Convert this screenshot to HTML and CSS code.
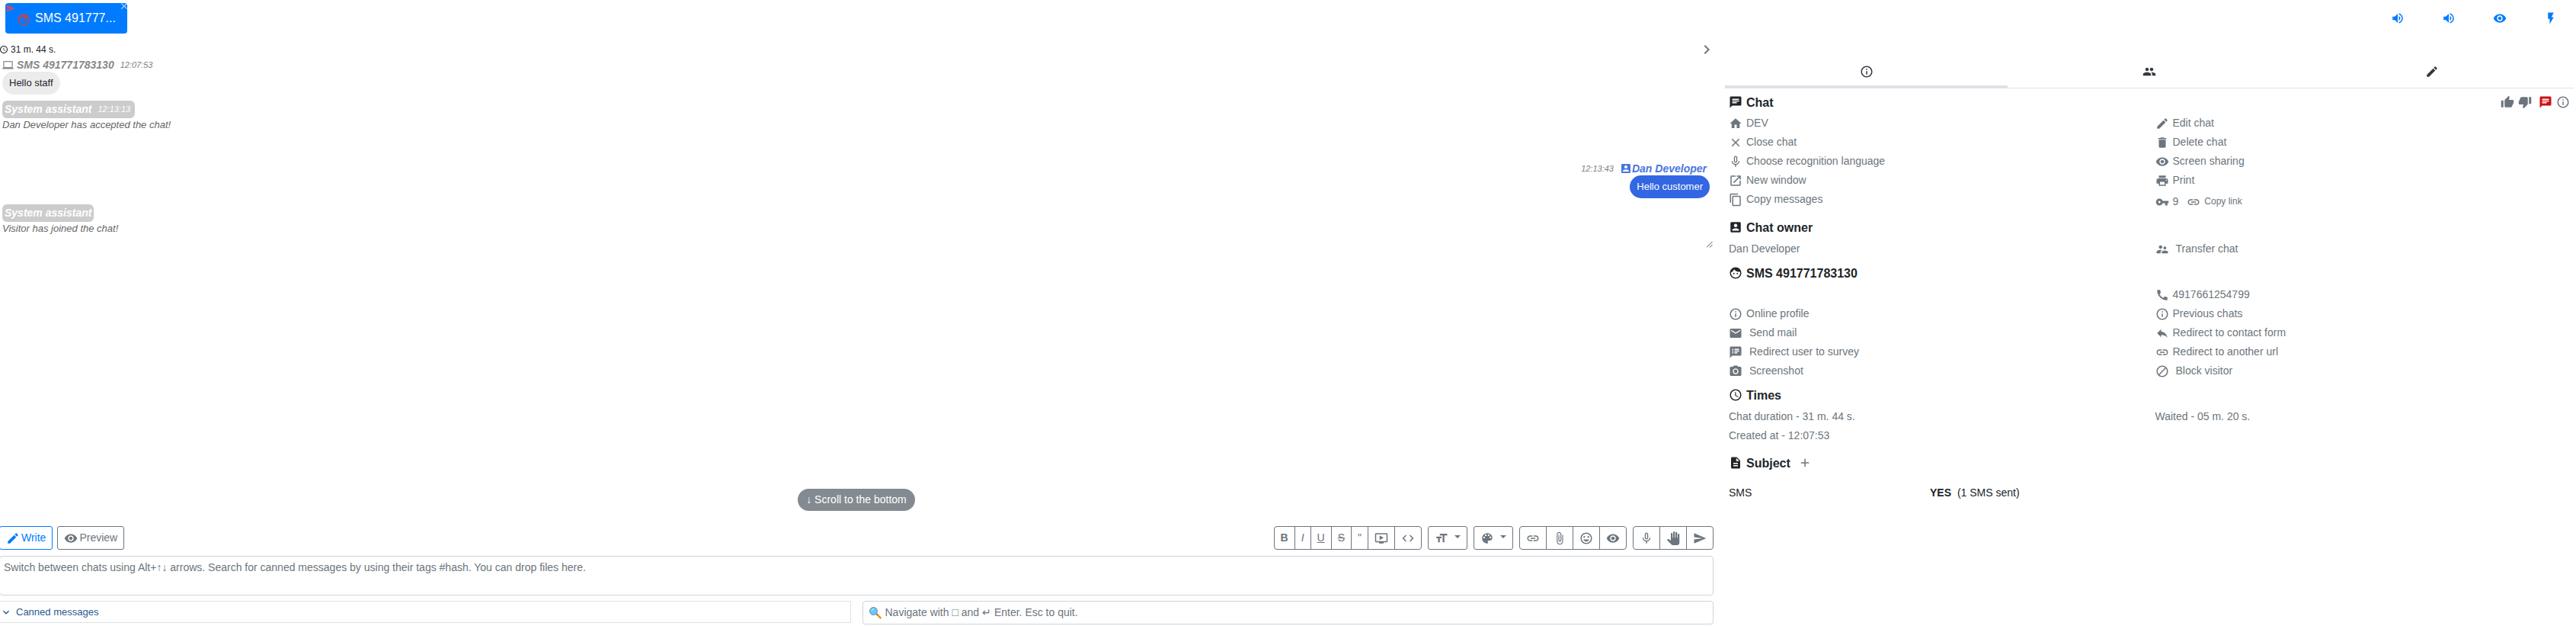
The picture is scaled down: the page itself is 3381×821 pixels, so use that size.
FILE: index.html
```
<!DOCTYPE html>
<html lang="en">
<head>
<meta charset="utf-8">
<title>Chat</title>
<link rel="stylesheet" href="styles.css">
</head>
<body>
<svg class="sprite" aria-hidden="true">
  <symbol id="send" viewBox="0 0 24 24"><path d="M2 21l21-9L2 3v7l15 2-15 2z"/></symbol>
  <symbol id="face" viewBox="0 0 24 24"><path d="M9 11.75A1.25 1.25 0 1 0 9 14.25 1.25 1.25 0 1 0 9 11.75zM15 11.75A1.25 1.25 0 1 0 15 14.25 1.25 1.25 0 1 0 15 11.75zM12 2C6.48 2 2 6.48 2 12s4.48 10 10 10 10-4.48 10-10S17.52 2 12 2zm0 18c-4.41 0-8-3.59-8-8 0-.29.02-.58.05-.86 2.36-1.05 4.23-2.98 5.21-5.37C11.07 8.33 14.05 10 17.42 10c.78 0 1.53-.09 2.25-.26.21.71.33 1.47.33 2.26 0 4.41-3.59 8-8 8z"/></symbol>
  <symbol id="close" viewBox="0 0 24 24"><path d="M19 6.41L17.59 5 12 10.59 6.41 5 5 6.41 10.59 12 5 17.59 6.41 19 12 13.41 17.59 19 19 17.59 13.41 12z"/></symbol>
  <symbol id="volume" viewBox="0 0 24 24"><path d="M3 9v6h4l5 5V4L7 9H3zm13.5 3c0-1.77-1.02-3.29-2.5-4.03v8.05c1.48-.73 2.5-2.25 2.5-4.02zM14 3.23v2.06c2.89.86 5 3.54 5 6.71s-2.11 5.85-5 6.71v2.06c4.01-.91 7-4.49 7-8.77s-2.99-7.86-7-8.77z"/></symbol>
  <symbol id="eye" viewBox="0 0 24 24"><path d="M12 4.5C7 4.5 2.73 7.61 1 12c1.73 4.39 6 7.5 11 7.5s9.27-3.11 11-7.5c-1.73-4.39-6-7.5-11-7.5zM12 17c-2.76 0-5-2.24-5-5s2.24-5 5-5 5 2.24 5 5-2.24 5-5 5zm0-8c-1.66 0-3 1.34-3 3s1.34 3 3 3 3-1.34 3-3-1.34-3-3-3z"/></symbol>
  <symbol id="flash" viewBox="0 0 24 24"><path d="M7 2v11h3v9l7-12h-4l4-8z"/></symbol>
  <symbol id="clock" viewBox="0 0 24 24"><path d="M11.99 2C6.47 2 2 6.48 2 12s4.47 10 9.99 10C17.52 22 22 17.52 22 12S17.52 2 11.99 2zM12 20c-4.42 0-8-3.58-8-8s3.58-8 8-8 8 3.58 8 8-3.58 8-8 8zm.5-13H11v6l5.25 3.15.75-1.23-4.5-2.67z"/></symbol>
  <symbol id="laptop" viewBox="0 0 24 24"><path d="M20 18c1.1 0 1.99-.9 1.99-2L22 5c0-1.1-.9-2-2-2H4c-1.1 0-2 .9-2 2v11c0 1.1.9 2 2 2H0v2h24v-2h-4zM4 5h16v11H4V5z"/></symbol>
  <symbol id="account" viewBox="0 0 24 24"><path d="M3 5v14c0 1.1.89 2 2 2h14c1.1 0 2-.9 2-2V5c0-1.1-.9-2-2-2H5c-1.11 0-2 .9-2 2zm12 4c0 1.66-1.34 3-3 3s-3-1.34-3-3 1.34-3 3-3 3 1.34 3 3zm-9 8c0-2 4-3.1 6-3.1s6 1.1 6 3.1v1H6v-1z"/></symbol>
  <symbol id="chevron-right" viewBox="0 0 24 24"><path d="M10 6L8.59 7.41 13.17 12l-4.58 4.59L10 18l6-6z"/></symbol>
  <symbol id="chevron-down" viewBox="0 0 24 24"><path d="M7.41 8.59L12 13.17l4.59-4.58L18 10l-6 6-6-6z"/></symbol>
  <symbol id="info" viewBox="0 0 24 24"><path d="M11 17h2v-6h-2v6zm1-15C6.48 2 2 6.48 2 12s4.48 10 10 10 10-4.48 10-10S17.52 2 12 2zm0 18c-4.41 0-8-3.59-8-8s3.59-8 8-8 8 3.59 8 8-3.59 8-8 8zM11 9h2V7h-2v2z"/></symbol>
  <symbol id="people" viewBox="0 0 24 24"><path d="M16 11c1.66 0 2.99-1.34 2.99-3S17.66 5 16 5s-3 1.34-3 3 1.34 3 3 3zm-8 0c1.66 0 2.99-1.34 2.99-3S9.66 5 8 5 5 6.34 5 8s1.34 3 3 3zm0 2c-2.33 0-7 1.17-7 3.5V19h14v-2.500c0-2.330-4.670-3.500-7-3.500zm8 0c-.29 0-.62.02-.97.05 1.160.84 1.970 1.970 1.970 3.450V19h6v-2.500c0-2.330-4.670-3.500-7-3.500z"/></symbol>
  <symbol id="supervisor" viewBox="0 0 24 24"><path d="M16.500 12c1.380 0 2.490-1.120 2.490-2.500S17.880 7 16.500 7 14 8.120 14 9.500s1.120 2.500 2.500 2.500zM9 11c1.660 0 2.990-1.340 2.990-3S10.660 5 9 5 6 6.340 6 8s1.340 3 3 3zm7.500 3c-1.830 0-5.500.920-5.500 2.750V19h11v-2.250c0-1.830-3.670-2.750-5.500-2.750zM9 13c-2.330 0-7 1.170-7 3.500V19h7v-2.250c0-.850.330-2.340 2.370-3.470C10.500 13.100 9.660 13 9 13z"/></symbol>
  <symbol id="pencil" viewBox="0 0 24 24"><path d="M3 17.25V21h3.75L17.81 9.940l-3.750-3.750L3 17.250zM20.710 7.040c.39-.39.39-1.020 0-1.410l-2.340-2.340c-.39-.39-1.020-.39-1.410 0l-1.830 1.830 3.750 3.750 1.830-1.830z"/></symbol>
  <symbol id="chat" viewBox="0 0 24 24"><path d="M20 2H4c-1.100 0-1.990.9-1.990 2L2 22l4-4h14c1.100 0 2-.9 2-2V4c0-1.100-.9-2-2-2zM6 9h12v2H6V9zm8 5H6v-2h8v2zm4-6H6V6h12v2z"/></symbol>
  <symbol id="home" viewBox="0 0 24 24"><path d="M10 20v-6h4v6h5v-8h3L12 3 2 12h3v8z"/></symbol>
  <symbol id="mic" viewBox="0 0 24 24"><path d="M12 14c1.660 0 2.990-1.340 2.990-3L15 5c0-1.660-1.340-3-3-3S9 3.340 9 5v6c0 1.660 1.340 3 3 3zm-1.200-9.100c0-.66.54-1.200 1.200-1.200s1.200.54 1.200 1.200l-.010 6.200c0 .66-.53 1.200-1.190 1.200s-1.200-.54-1.200-1.200V4.900zm6.500 6.100c0 3-2.540 5.100-5.300 5.100S6.700 14 6.700 11H5c0 3.410 2.720 6.230 6 6.720V21h2v-3.280c3.280-.48 6-3.300 6-6.720h-1.700z"/></symbol>
  <symbol id="open" viewBox="0 0 24 24"><path d="M19 19H5V5h7V3H5c-1.110 0-2 .9-2 2v14c0 1.100.89 2 2 2h14c1.100 0 2-.9 2-2v-7h-2v7zM14 3v2h3.590l-9.830 9.830 1.410 1.410L19 6.410V10h2V3h-7z"/></symbol>
  <symbol id="copy" viewBox="0 0 24 24"><path d="M16 1H4c-1.100 0-2 .9-2 2v14h2V3h12V1zm3 4H8c-1.100 0-2 .9-2 2v14c0 1.100.9 2 2 2h11c1.100 0 2-.9 2-2V7c0-1.100-.9-2-2-2zm0 16H8V7h11v14z"/></symbol>
  <symbol id="thumb-up" viewBox="0 0 24 24"><path d="M1 21h4V9H1v12zm22-11c0-1.100-.9-2-2-2h-6.310l.95-4.570.030-.32c0-.41-.17-.79-.44-1.060L14.170 1 7.590 7.590C7.220 7.950 7 8.450 7 9v10c0 1.100.9 2 2 2h9c.83 0 1.540-.5 1.840-1.220l3.020-7.050c.09-.23.14-.47.14-.73v-2z"/></symbol>
  <symbol id="thumb-down" viewBox="0 0 24 24"><path d="M15 3H6c-.83 0-1.540.5-1.840 1.220l-3.020 7.050c-.09.23-.14.47-.14.73v2c0 1.100.9 2 2 2h6.310l-.95 4.570-.03.32c0 .41.17.79.44 1.060L9.830 23l6.590-6.590c.36-.36.58-.86.58-1.410V5c0-1.100-.9-2-2-2zm4 0v12h4V3h-4z"/></symbol>
  <symbol id="trash" viewBox="0 0 24 24"><path d="M6 19c0 1.100.9 2 2 2h8c1.100 0 2-.9 2-2V7H6v12zM19 4h-3.500l-1-1h-5l-1 1H5v2h14V4z"/></symbol>
  <symbol id="print" viewBox="0 0 24 24"><path d="M19 8H5c-1.660 0-3 1.340-3 3v6h4v4h12v-4h4v-6c0-1.660-1.340-3-3-3zm-3 11H8v-5h8v5zm3-7c-.55 0-1-.45-1-1s.45-1 1-1 1 .45 1 1-.45 1-1 1zm-1-9H6v4h12V3z"/></symbol>
  <symbol id="key" viewBox="0 0 24 24"><path d="M12.650 10C11.830 7.670 9.610 6 7 6c-3.310 0-6 2.690-6 6s2.690 6 6 6c2.610 0 4.830-1.670 5.650-4H17v4h4v-4h2v-4H12.650zM7 14c-1.100 0-2-.9-2-2s.9-2 2-2 2 .9 2 2-.9 2-2 2z"/></symbol>
  <symbol id="link" viewBox="0 0 24 24"><path d="M3.900 12c0-1.710 1.390-3.100 3.100-3.100h4V7H7c-2.760 0-5 2.240-5 5s2.240 5 5 5h4v-1.900H7c-1.710 0-3.100-1.390-3.100-3.100zM8 13h8v-2H8v2zm9-6h-4v1.900h4c1.710 0 3.100 1.390 3.100 3.100s-1.390 3.100-3.100 3.100h-4V17h4c2.760 0 5-2.240 5-5s-2.240-5-5-5z"/></symbol>
  <symbol id="phone" viewBox="0 0 24 24"><path d="M20.010 15.380c-1.230 0-2.420-.2-3.530-.56-.35-.12-.74-.03-1.010.24l-1.570 1.970c-2.830-1.350-5.480-3.900-6.890-6.830l1.950-1.660c.27-.28.35-.67.24-1.020-.37-1.110-.56-2.300-.56-3.530 0-.54-.45-.99-.99-.99H4.190C3.650 3 3 3.240 3 3.990 3 13.280 10.730 21 20.010 21c.71 0 .99-.63.99-1.180v-3.450c0-.54-.45-.99-.99-.99z"/></symbol>
  <symbol id="mail" viewBox="0 0 24 24"><path d="M20 4H4c-1.100 0-1.990.9-1.990 2L2 18c0 1.100.9 2 2 2h16c1.100 0 2-.9 2-2V6c0-1.100-.9-2-2-2zm0 4l-8 5-8-5V6l8 5 8-5v2z"/></symbol>
  <symbol id="survey" viewBox="0 0 24 24"><path d="M20 2H4c-1.100 0-1.990.9-1.990 2L2 22l4-4h14c1.100 0 2-.9 2-2V4c0-1.100-.9-2-2-2zM8 14H6v-2h2v2zm0-3H6V9h2v2zm0-3H6V6h2v2zm7 6h-5v-2h5v2zm3-3h-8V9h8v2zm0-3h-8V6h8v2z"/></symbol>
  <symbol id="camera" viewBox="0 0 24 24"><path d="M12 8.800a3.200 3.200 0 1 0 0 6.400 3.200 3.200 0 1 0 0-6.400zM9 2L7.170 4H4c-1.100 0-2 .9-2 2v12c0 1.100.9 2 2 2h16c1.100 0 2-.9 2-2V6c0-1.100-.9-2-2-2h-3.170L15 2H9zm3 15c-2.760 0-5-2.240-5-5s2.240-5 5-5 5 2.240 5 5-2.240 5-5 5z"/></symbol>
  <symbol id="reply" viewBox="0 0 24 24"><path d="M10 9V5l-7 7 7 7v-4.100c5 0 8.500 1.600 11 5.100-1-5-4-10-11-11z"/></symbol>
  <symbol id="block" viewBox="0 0 24 24"><path d="M12 2C6.480 2 2 6.480 2 12s4.480 10 10 10 10-4.480 10-10S17.520 2 12 2zM4 12c0-4.420 3.580-8 8-8 1.850 0 3.550.63 4.900 1.690L5.690 16.900C4.630 15.550 4 13.850 4 12zm8 8c-1.850 0-3.550-.63-4.900-1.690L18.310 7.100C19.370 8.450 20 10.150 20 12c0 4.420-3.580 8-8 8z"/></symbol>
  <symbol id="file" viewBox="0 0 24 24"><path d="M14 2H6c-1.100 0-1.990.9-1.990 2L4 20c0 1.100.89 2 1.990 2H18c1.100 0 2-.9 2-2V8l-6-6zm2 16H8v-2h8v2zm0-4H8v-2h8v2zm-3-5V3.500L18.500 9H13z"/></symbol>
  <symbol id="plus" viewBox="0 0 24 24"><path d="M19 13h-6v6h-2v-6H5v-2h6V5h2v6h6v2z"/></symbol>
  <symbol id="video" viewBox="0 0 24 24"><path d="M21 3H3c-1.110 0-2 .89-2 2v12c0 1.100.89 2 2 2h5v2h8v-2h5c1.100 0 1.990-.9 1.990-2L23 5c0-1.110-.9-2-2-2zm0 14H3V5h18v12zm-5-6l-7 4V7z"/></symbol>
  <symbol id="code" viewBox="0 0 24 24"><path d="M9.400 16.600L4.800 12l4.600-4.600L8 6l-6 6 6 6 1.400-1.400zm5.200 0l4.600-4.600-4.600-4.600L16 6l6 6-6 6-1.400-1.400z"/></symbol>
  <symbol id="size" viewBox="0 0 24 24"><path d="M9 4v3h5v12h3V7h5V4H9zm-6 8h3v7h3v-7h3V9H3v3z"/></symbol>
  <symbol id="palette" viewBox="0 0 24 24"><path d="M12 3c-4.970 0-9 4.030-9 9s4.030 9 9 9c.83 0 1.500-.67 1.500-1.500 0-.39-.15-.74-.39-1.010-.23-.26-.38-.61-.38-.99 0-.83.67-1.500 1.500-1.500H16c2.760 0 5-2.240 5-5 0-4.420-4.030-8-9-8zm-5.500 9c-.83 0-1.500-.67-1.500-1.500S5.670 9 6.500 9 8 9.670 8 10.500 7.330 12 6.500 12zm3-4C8.670 8 8 7.330 8 6.500S8.670 5 9.500 5s1.500.67 1.500 1.500S10.330 8 9.500 8zm5 0c-.83 0-1.500-.67-1.500-1.500S13.670 5 14.500 5s1.500.67 1.500 1.500S15.330 8 14.500 8zm3 4c-.83 0-1.500-.67-1.500-1.500S16.670 9 17.500 9s1.500.67 1.500 1.500-.67 1.500-1.500 1.500z"/></symbol>
  <symbol id="attach" viewBox="0 0 24 24"><path d="M16.500 6v11.500c0 2.210-1.790 4-4 4s-4-1.790-4-4V5c0-1.380 1.120-2.500 2.500-2.500s2.500 1.120 2.500 2.500v10.500c0 .55-.45 1-1 1s-1-.45-1-1V6H10v9.500c0 1.380 1.120 2.500 2.500 2.500s2.500-1.120 2.500-2.500V5c0-2.210-1.790-4-4-4S7 2.790 7 5v12.500c0 3.040 2.460 5.500 5.500 5.500s5.500-2.460 5.500-5.500V6h-1.500z"/></symbol>
  <symbol id="smile" viewBox="0 0 24 24"><path d="M11.990 2C6.470 2 2 6.480 2 12s4.470 10 9.990 10C17.520 22 22 17.520 22 12S17.520 2 11.990 2zM12 20c-4.420 0-8-3.580-8-8s3.580-8 8-8 8 3.580 8 8-3.580 8-8 8zm3.500-9c.83 0 1.500-.67 1.500-1.500S16.330 8 15.500 8 14 8.670 14 9.500s.67 1.500 1.500 1.500zm-7 0c.83 0 1.500-.67 1.500-1.500S9.330 8 8.500 8 7 8.670 7 9.500 7.670 11 8.500 11zm3.500 6.500c2.330 0 4.310-1.460 5.110-3.500H6.890c.8 2.040 2.780 3.500 5.110 3.500z"/></symbol>
  <symbol id="hand" viewBox="0 0 24 24"><path d="M23 5.500V20c0 2.200-1.800 4-4 4h-7.300c-1.080 0-2.100-.43-2.850-1.190L1 14.830s1.260-1.230 1.300-1.250c.22-.19.49-.29.79-.29.22 0 .42.060.6.160.04.010 4.310 2.460 4.310 2.460V4c0-.83.67-1.500 1.500-1.500S11 3.170 11 4v7h1V1.500c0-.83.67-1.500 1.500-1.500S15 .67 15 1.500V11h1V2.500c0-.83.67-1.500 1.500-1.500s1.500.67 1.500 1.500V11h1V5.500c0-.83.67-1.500 1.500-1.500s1.500.67 1.500 1.500z"/></symbol>
  <symbol id="grip" viewBox="0 0 8 8"><path d="M0 7.500L7.500 0M4 7.500L7.500 4" fill="none" stroke="currentColor"/></symbol>
  <symbol id="magnifier" viewBox="0 0 16 16"><path d="M9 10l1.500-1.500L16 14l-1.500 2z" fill="#f58a07"/><path d="M8.500 9.500l1.500-1 1.500 1.500-1.500 1.500z" fill="#757575"/><circle cx="5.500" cy="5.500" r="5" fill="#6ec6f7" stroke="#5f8fae"/><path d="M3 5a3 3 0 0 1 3-2" fill="none" stroke="#d7f1ff"/></symbol>
</svg>

<header class="topbar">
  <div class="chat-tab">
    <svg class="tab-send"><use href="#send"/></svg>
    <a class="tab-link" href="#chat-panel"><svg class="icon tab-face"><use href="#face"/></svg>SMS 491777...</a>
    <button class="tab-close" type="button" aria-label="Close"><svg><use href="#close"/></svg></button>
  </div>
  <nav class="quick">
    <a href="#sound" aria-label="Chat sound"><svg class="icon"><use href="#volume"/></svg></a>
    <a href="#message-sound" aria-label="Message sound"><svg class="icon"><use href="#volume"/></svg></a>
    <a href="#visibility" aria-label="Visibility"><svg class="icon"><use href="#eye"/></svg></a>
    <a href="#online" aria-label="Online"><svg class="icon"><use href="#flash"/></svg></a>
  </nav>
</header>

<main class="workspace" id="chat-panel">
  <section class="conversation">
    <div class="status">
      <span class="duration"><svg><use href="#clock"/></svg>31 m. 44 s.</span>
      <button class="collapse" type="button" aria-label="Collapse"><svg><use href="#chevron-right"/></svg></button>
    </div>
    <div class="messages">
      <article class="message">
        <div class="sender"><svg class="laptop"><use href="#laptop"/></svg><b>SMS 491771783130</b><time>12:07:53</time></div>
        <p class="bubble">Hello staff</p>
      </article>
      <article class="message system">
        <div class="sender"><b>System assistant</b><time>12:13:13</time></div>
        <p>Dan Developer has accepted the chat!</p>
      </article>
      <article class="message own">
        <div class="sender"><time>12:13:43</time><svg><use href="#account"/></svg><b>Dan Developer</b></div>
        <p class="bubble">Hello customer</p>
      </article>
      <article class="message system">
        <div class="sender"><b>System assistant</b></div>
        <p>Visitor has joined the chat!</p>
      </article>
      <svg class="grip"><use href="#grip"/></svg>
    </div>
    <button class="scroll-down" type="button">↓ Scroll to the bottom</button>
    <div class="toolbar">
      <button class="btn write" type="button"><svg class="icon"><use href="#pencil"/></svg>Write</button>
      <button class="btn" type="button"><svg class="icon"><use href="#eye"/></svg>Preview</button>
      <div class="group push">
        <button class="btn" type="button"><b>B</b></button>
        <button class="btn" type="button"><i>I</i></button>
        <button class="btn" type="button"><u>U</u></button>
        <button class="btn" type="button"><s>S</s></button>
        <button class="btn" type="button">"</button>
        <button class="btn" type="button" aria-label="Video"><svg class="icon"><use href="#video"/></svg></button>
        <button class="btn" type="button" aria-label="Code"><svg class="icon"><use href="#code"/></svg></button>
      </div>
      <button class="btn drop" type="button" aria-label="Text size"><svg class="icon"><use href="#size"/></svg></button>
      <button class="btn drop" type="button" aria-label="Colour"><svg class="icon"><use href="#palette"/></svg></button>
      <div class="group">
        <button class="btn" type="button" aria-label="Link"><svg class="icon"><use href="#link"/></svg></button>
        <button class="btn" type="button" aria-label="Attach"><svg class="icon"><use href="#attach"/></svg></button>
        <button class="btn" type="button" aria-label="Emoji"><svg class="icon"><use href="#smile"/></svg></button>
        <button class="btn" type="button" aria-label="Show"><svg class="icon"><use href="#eye"/></svg></button>
      </div>
      <div class="group">
        <button class="btn" type="button" aria-label="Dictate"><svg class="icon"><use href="#mic"/></svg></button>
        <button class="btn" type="button" aria-label="Hold"><svg class="icon"><use href="#hand"/></svg></button>
        <button class="btn" type="button" aria-label="Send"><svg class="icon"><use href="#send"/></svg></button>
      </div>
    </div>
    <textarea class="composer" aria-label="Message" placeholder="Switch between chats using Alt+↑↓ arrows. Search for canned messages by using their tags #hash. You can drop files here."></textarea>
    <div class="canned-row">
      <button class="canned" type="button"><svg><use href="#chevron-down"/></svg>Canned messages</button>
      <label class="search"><svg><use href="#magnifier"/></svg><input type="text" aria-label="Search canned messages" placeholder="Navigate with □ and ↵ Enter. Esc to quit."></label>
    </div>
  </section>

  <aside class="details">
    <nav class="tabs">
      <button class="active" type="button" aria-label="Information"><svg class="icon"><use href="#info"/></svg></button>
      <button type="button" aria-label="Operators"><svg class="icon"><use href="#people"/></svg></button>
      <button type="button" aria-label="Remarks"><svg class="icon"><use href="#pencil"/></svg></button>
    </nav>
    <section>
      <div class="head"><svg class="icon"><use href="#chat"/></svg><h2>Chat</h2>
        <div class="votes">
          <a href="#up" aria-label="Good"><svg class="icon"><use href="#thumb-up"/></svg></a>
          <a href="#down" aria-label="Bad"><svg class="icon"><use href="#thumb-down"/></svg></a>
          <a class="alert" href="#status" aria-label="Status"><svg class="icon"><use href="#chat"/></svg></a>
          <a href="#info-chat" aria-label="Info"><svg class="icon"><use href="#info"/></svg></a>
        </div>
      </div>
      <div class="pairs">
        <a href="#dev"><svg class="icon"><use href="#home"/></svg>DEV</a>
        <a href="#edit"><svg class="icon"><use href="#pencil"/></svg>Edit chat</a>
        <a href="#close-chat"><svg class="icon"><use href="#close"/></svg>Close chat</a>
        <a href="#delete"><svg class="icon"><use href="#trash"/></svg>Delete chat</a>
        <a href="#language"><svg class="icon"><use href="#mic"/></svg>Choose recognition language</a>
        <a href="#share"><svg class="icon"><use href="#eye"/></svg>Screen sharing</a>
        <a href="#window"><svg class="icon"><use href="#open"/></svg>New window</a>
        <a href="#print-chat"><svg class="icon"><use href="#print"/></svg>Print</a>
        <a href="#copy-chat"><svg class="icon"><use href="#copy"/></svg>Copy messages</a>
        <div class="key"><span><svg class="icon"><use href="#key"/></svg>9</span><a href="#copy-link"><svg class="icon"><use href="#link"/></svg>Copy link</a></div>
      </div>
    </section>
    <section>
      <div class="head"><svg class="icon"><use href="#account"/></svg><h2>Chat owner</h2></div>
      <div class="pairs">
        <span>Dan Developer</span>
        <a class="wide" href="#transfer"><svg class="icon"><use href="#supervisor"/></svg>Transfer chat</a>
      </div>
    </section>
    <section>
      <div class="head"><svg class="icon"><use href="#face"/></svg><h2>SMS 491771783130</h2></div>
      <div class="pairs">
        <span></span>
        <span><svg class="icon"><use href="#phone"/></svg>4917661254799</span>
        <a href="#profile"><svg class="icon"><use href="#info"/></svg>Online profile</a>
        <a href="#previous"><svg class="icon"><use href="#info"/></svg>Previous chats</a>
        <a class="wide" href="#mail-form"><svg class="icon"><use href="#mail"/></svg>Send mail</a>
        <a href="#contact"><svg class="icon"><use href="#reply"/></svg>Redirect to contact form</a>
        <a class="wide" href="#survey-form"><svg class="icon"><use href="#survey"/></svg>Redirect user to survey</a>
        <a href="#url"><svg class="icon"><use href="#link"/></svg>Redirect to another url</a>
        <a class="wide" href="#screenshot"><svg class="icon"><use href="#camera"/></svg>Screenshot</a>
        <a class="wide" href="#block-visitor"><svg class="icon"><use href="#block"/></svg>Block visitor</a>
      </div>
    </section>
    <section>
      <div class="head"><svg class="icon"><use href="#clock"/></svg><h2>Times</h2></div>
      <div class="pairs">
        <span>Chat duration - 31 m. 44 s.</span>
        <span>Waited - 05 m. 20 s.</span>
        <span>Created at - 12:07:53</span>
      </div>
    </section>
    <section class="subject">
      <div class="head"><svg class="icon"><use href="#file"/></svg><h2>Subject</h2><a class="add" href="#add-subject" aria-label="Add subject"><svg class="icon"><use href="#plus"/></svg></a></div>
    </section>
    <div class="sms"><span>SMS</span><span><b>YES</b> (1 SMS sent)</span></div>
  </aside>
</main>
</body>
</html>
```
FILE: styles.css
```
* { box-sizing: border-box; }
html, body { height: 100%; }
body {
  margin: 0;
  display: flex;
  flex-direction: column;
  overflow: hidden;
  background: #fff;
  color: #212529;
  font: 14px/21px "Liberation Sans", Arial, sans-serif;
}
h2, p { margin: 0; }
a { color: inherit; text-decoration: none; }
button, input, textarea { font: inherit; color: inherit; }
button { border: 0; background: none; padding: 0; }
svg { display: block; flex: none; fill: currentColor; }
.sprite { position: absolute; width: 0; height: 0; }
.icon { width: 18px; height: 18px; }

.topbar { display: flex; justify-content: space-between; padding: 4px 0 0 7px; }
.chat-tab {
  position: relative;
  width: 160px;
  height: 40px;
  padding: 8px 15px;
  border-radius: 4px;
  background: #007bff;
  color: #fff;
  font-size: 16px;
  line-height: 24px;
}
.tab-link { display: flex; align-items: center; gap: 6px; white-space: nowrap; height: 24px; }
.tab-face { color: #bd4455; margin-top: 3px; }
.tab-send { position: absolute; left: 1px; top: 1px; width: 12px; height: 12px; color: #ee4455; }
.tab-close { position: absolute; right: -3px; top: -3px; color: #b8d9ff; }
.tab-close svg { width: 14px; height: 14px; }
.quick { display: flex; color: #007bff; }
.quick a { width: 67px; height: 40px; display: flex; justify-content: center; align-items: center; }

.workspace { flex: 1; min-height: 0; display: grid; grid-template-columns: 2fr 1fr; }
.conversation { min-width: 0; display: flex; flex-direction: column; margin: 10px 5px 2px -1px; }
.status { display: flex; justify-content: space-between; align-items: center; height: 22px; font-size: 12px; }
.duration { display: flex; align-items: center; gap: 3px; }
.duration svg { width: 12px; height: 12px; }
.collapse { margin-right: -3px; color: #6c757d; }
.collapse svg { width: 24px; height: 24px; }

.messages { position: relative; height: 250px; padding: 0 5px 0 4px; }
.message { display: flex; flex-direction: column; align-items: flex-start; }
.message p { font-size: 13px; line-height: 18px; }
.message .bubble { padding: 6px 9px; border-radius: 15px; background: #ececec; }
.sender { display: flex; align-items: center; height: 18px; color: #888; font-style: italic; }
.sender time { margin-left: 8px; font-size: 11px; color: #808080; }
.sender .laptop { width: 15px; height: 15px; margin-right: 4px; }
.system { margin-top: 8px; color: #666; font-style: italic; }
.system .sender { height: 23px; padding: 0 3px; border-radius: 6px; background: #ccc; color: #fff; }
.system .sender time { color: #fff; margin-right: 3px; }
.own { align-items: flex-end; margin-top: 39px; }
.own .sender { color: #4a76dc; padding-right: 4px; }
.own time { margin-right: 8px; }
.own .sender svg { width: 16px; height: 16px; }
.own .bubble { background: #3366e3; color: #fff; }
.grip { position: absolute; right: 1px; bottom: 1px; width: 8px; height: 8px; color: #555; }

.scroll-down {
  align-self: center;
  margin-top: auto;
  padding: 4px 11px;
  border-radius: 15px;
  background: #838a91;
  color: #fff;
}
.toolbar { display: flex; gap: 8px; margin-top: 20px; }
.btn {
  display: flex;
  align-items: center;
  justify-content: center;
  height: 31px;
  padding: 0 8px;
  border: 1px solid #6c757d;
  border-radius: 3px;
  color: #6c757d;
}
.write { border-color: #007bff; color: #007bff; margin-right: -2px; }
.write .icon, .write + .btn .icon { margin-right: 2px; }
.push { margin-left: auto; }
.group { display: flex; }
.group .btn { border-radius: 0; }
.group .btn + .btn { margin-left: -1px; }
.group .btn:first-child { border-radius: 4px 0 0 4px; }
.group .btn:last-child { border-radius: 0 4px 4px 0; }
.drop::after { content: ""; margin: -4px 0 0 8px; border: 4px solid transparent; border-top-color: currentColor; border-bottom: 0; }
.composer {
  display: block;
  width: 100%;
  height: 52px;
  margin: 8px 0 7px;
  padding: 4px 5px;
  border: 1px solid #ced4da;
  border-radius: 4px;
  resize: none;
}
.composer::placeholder, .search input::placeholder { color: #6c757d; opacity: 1; }
.canned-row { display: grid; grid-template-columns: 1fr 1fr; gap: 15px; align-items: start; }
.canned { display: flex; align-items: center; gap: 5px; height: 29px; padding-left: 0; border: 1px solid #dee2e6; color: #2a5894; font-size: 13px; }
.canned svg { width: 16px; height: 16px; }
.search { display: flex; align-items: center; gap: 5px; height: 31px; padding: 0 8px; border: 1px solid #ced4da; border-radius: 4px; }
.search svg { width: 16px; height: 16px; }
.search input { flex: 1; min-width: 0; border: 0; padding: 0; background: none; outline: 0; }

.details { min-width: 0; margin: 31px 3px 0 10px; }
.tabs { display: grid; grid-template-columns: repeat(3, 1fr); height: 41px; border-bottom: 1px solid #dee2e6; }
.tabs button { height: 41px; padding-bottom: 3px; display: flex; justify-content: center; align-items: center; color: #343a40; }
.tabs .active { border-bottom: 4px solid #dee2e6; padding: 0; }
.details section { padding: 0 0 4px 5px; }
.details .tabs + section { padding-top: 3px; }
.head { display: flex; align-items: center; gap: 5px; height: 30px; margin-bottom: 1px; }
.tabs + section .head { margin-bottom: 0; }
.head h2 { font-size: 16px; }
.votes { display: flex; gap: 5px; margin-left: auto; padding-right: 5px; color: #6c757d; }
.votes .alert { color: #cc1111; margin-left: 4px; }
.pairs { display: grid; grid-template-columns: 1fr 1fr; gap: 0 10px; color: #6c757d; }
.pairs > * { display: flex; align-items: center; gap: 5px; height: 25px; }
.pairs .icon { margin-top: 1px; }
.pairs .wide { gap: 9px; }
.pairs .key { height: 30px; gap: 11px; }
.key > * { display: flex; align-items: center; gap: 5px; }
.key a { font-size: 12px; }
.details .subject { padding-top: 4px; }
.add { margin-left: 5px; color: #6c757d; }
.sms { display: grid; grid-template-columns: 259px 1fr; gap: 5px; padding: 9px 0 0 5px; }
.sms b { margin-right: 4px; }
```
